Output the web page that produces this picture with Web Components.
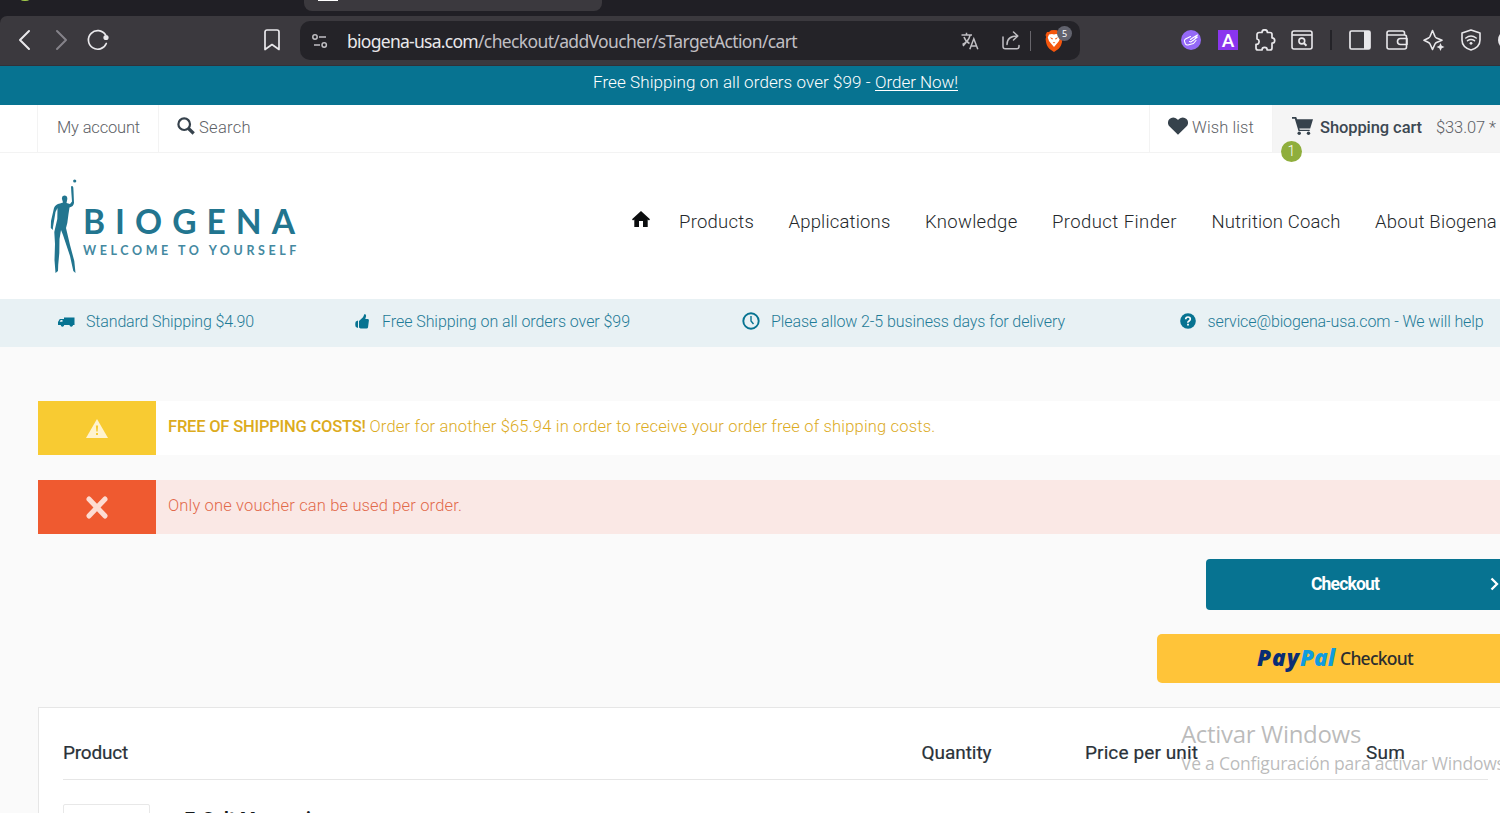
<!DOCTYPE html>
<html lang="en">
<head>
<meta charset="utf-8">
<title>Shopping cart | Biogena</title>
<style>
    html, body {
        margin: 0;
        height: 813px;
        overflow: hidden;
    }

    body {
        --teal: #077391;
        --text: #5b6168;
        background: #fafafa;
        font-family: Roboto, "Liberation Sans", sans-serif;
        font-weight: 300;
        color: var(--text);
    }
</style>
</head>
<body>
<shop-page></shop-page>

<script>
/**
 * Base class: renders the static `html` of the subclass into an open shadow root
 * @extends {HTMLElement}
 */
class BaseElement extends HTMLElement {
    constructor() {
        super();
        this.attachShadow({ mode: 'open' });
        this.shadowRoot.innerHTML = this.constructor.html;
    }
}

/**
 * Line of text tracked out to a given width
 * Attributes: w (px)
 */
class TextRun extends BaseElement {
    static html = `
        <style>
            :host { display: block; white-space: nowrap; flex: none; }
            span { display: inline-block; white-space: pre; text-decoration: inherit; text-underline-offset: inherit; }
        </style>
        <span><slot></slot></span>
    `;

    connectedCallback() {
        const target = Number(this.getAttribute('w'));
        const span = this.shadowRoot.querySelector('span');
        const chars = this.textContent.length;
        if (!target || !chars) {
            return;
        }
        const natural = span.getBoundingClientRect().width;
        span.style.letterSpacing = `${(target - natural) / chars}px`;
        this.style.width = `${target}px`;
    }
}

const ICONS = {
    back: ['0 0 24 24', '<path d="M17 3 8 12l9 9" fill="none" stroke="currentColor" stroke-width="2" stroke-linecap="round" stroke-linejoin="round"/>'],
    forward: ['0 0 24 24', '<path d="m7 3 9 9-9 9" fill="none" stroke="currentColor" stroke-width="2" stroke-linecap="round" stroke-linejoin="round"/>'],
    reload: ['0 0 24 24', '<path d="M20.300 15.500A9.300 9.300 0 1 1 19.500 6.800" fill="none" stroke="currentColor" stroke-width="1.700" stroke-linecap="round"/><circle cx="20" cy="9.500" r="2.600" fill="currentColor"/>'],
    bookmark: ['0 0 16 22', '<path d="M1 3a2 2 0 0 1 2-2h10a2 2 0 0 1 2 2v17.500l-7-5-7 5z" fill="none" stroke="currentColor" stroke-width="1.700" stroke-linejoin="round"/>'],
    tune: ['0 0 16 14', '<g fill="none" stroke="currentColor" stroke-width="1.500"><circle cx="3" cy="3" r="2.200"/><path d="M7 3h7M2 11h6"/><circle cx="12.200" cy="11" r="2.200"/></g>'],
    translate: ['0 0 18 18', '<g fill="none" stroke="currentColor" stroke-width="1.500"><path d="M.5 3h10.500M5.500.8V3M2 14l3-3.600M3 5c1 3 3.500 5.500 5.500 6.500M9 3.500C8 7.500 5 10.800 1.500 12.500"/><path d="m8.800 17.300 4-10.500 4 10.500M10 14h5.600"/></g>'],
    share: ['0 0 18 19', '<g fill="none" stroke="currentColor" stroke-width="1.500" stroke-linecap="round" stroke-linejoin="round"><path d="M1 6v9.500a2.300 2.300 0 0 0 2.300 2.300h11.400a2.300 2.300 0 0 0 2.300-2.300v-1"/><path d="M5 13.500C5 8 8.500 5 15.500 5M11.500 1l4.300 4-4.300 4"/></g>'],
    brave: ['0 0 18 22', '<path d="M9 0l3 .2L14 2h2l1.500 3-.7 2 .6 2c-.4 5-1.800 8-4 10L9 22l-4.400-3C2.400 17 1 14 .6 9l.6-2L.5 5 2 2h2L6 .2z" fill="#f4560e"/><path d="M4 4.500 7 4l2 .6 2-.6 3 .5 1.200 3-1.200 3.500-1.800 2.200L9 17l-3.200-3.800L4 11 2.800 7.500z" fill="#fff"/><path d="m4.800 7.300 3 1-.5 1.500zM13.200 7.300l-3 1 .5 1.500zM7.600 12.200h2.800L9 13.600z" fill="#f4560e"/>'],
    tag: ['0 0 20 20', '<circle cx="10" cy="10" r="10" fill="#9469f6"/><path d="M9.500 6.500 4.500 9q-1.500 1-1 2.500l1 2.500q.7 1.300 2.500 1l5.500-1.500 2.500-3M8.500 11.500q2 1 3-1M9.500 9.500 11.500 8l5-3M12 10.500 16.300 7l-3-.3" fill="none" stroke="#fff" stroke-width="1.100" stroke-linejoin="round" stroke-linecap="round"/>'],
    puzzle: ['0 0 22 22', '<path d="M5 3.500h3a2.700 2.700 0 0 1 5.400 0H16a2 2 0 0 1 2 2v3.300a2.700 2.700 0 0 1 0 5.400V19a2 2 0 0 1-2 2h-2.800a2.600 2.600 0 0 0-5.200 0H4a2 2 0 0 1-2-2v-3.700a2.700 2.700 0 0 0 1-5.300V5.500a2 2 0 0 1 2-2z" fill="none" stroke="currentColor" stroke-width="1.700" stroke-linejoin="round"/>'],
    winsearch: ['0 0 22 20', '<g fill="none" stroke="currentColor" stroke-width="1.600"><rect x="1" y="1" width="20" height="18" rx="2"/><path d="M1 5h20"/><circle cx="10.800" cy="11" r="2.900"/><path d="m13 13.200 2.500 2.500" stroke-width="2"/></g>'],
    sidebar: ['0 0 22 20', '<rect x="1" y="1" width="20" height="18" rx="1.500" fill="none" stroke="currentColor" stroke-width="1.700"/><path d="M15 1h6v18h-6z" fill="currentColor"/>'],
    wallet: ['0 0 22 20', '<g fill="none" stroke="currentColor" stroke-width="1.600" stroke-linejoin="round"><path d="M18.500 5V3a2 2 0 0 0-2-2H3a2 2 0 0 0-2 2v14a2 2 0 0 0 2 2h15.500a2 2 0 0 0 2-2V7a2 2 0 0 0-2-2H1.500"/><path d="M21 8.500h-6.500a3 3 0 0 0 0 6H21z"/></g>'],
    sparkle: ['0 0 22 22', '<path d="M9.500 1.500 12 7.500q.5 1 1.500 1.500l5.500 2.300-5.500 2.200q-1 .5-1.500 1.500l-2.500 5.500L7 15q-.5-1-1.500-1.500L1 11.300 5.500 9Q6.500 8.500 7 7.500z" fill="none" stroke="currentColor" stroke-width="1.600" stroke-linejoin="round"/><path d="m17.500 14 1.200 2.800 2.800 1.200-2.800 1.200-1.200 2.800-1.200-2.800-2.800-1.200 2.800-1.200z" fill="currentColor"/>'],
    vpn: ['0 0 20 22', '<path d="M10 1 19 4v7c0 5-4 8.500-9 10-5-1.500-9-5-9-10V4z" fill="none" stroke="currentColor" stroke-width="1.600" stroke-linejoin="round"/><g fill="none" stroke="currentColor" stroke-width="1.500" stroke-linecap="round"><path d="M4.800 9q5.200-3.800 10.400 0M6.500 11.700q3.500-2.500 7 0"/></g><circle cx="10" cy="14.300" r="1.400" fill="currentColor"/>'],
    search: ['0 0 18 18', '<circle cx="7.200" cy="7.200" r="5.800" fill="none" stroke="currentColor" stroke-width="2.200"/><path d="m11.500 11.500 5.200 5" stroke="currentColor" stroke-width="3.200"/>'],
    heart: ['0 0 20 18', '<path d="M10 17.800 1.600 9.600A5.300 5.300 0 0 1 1.500 2 5.200 5.200 0 0 1 9 2l1 1.100L11 2a5.200 5.200 0 0 1 7.500 0 5.300 5.300 0 0 1-.1 7.600z" fill="currentColor"/>'],
    cart: ['0 0 21 18', '<path d="M0 0h4.200l.9 2.200H21L18.200 11.500H7.300l.4 1.300h10V14H6.500L2.800 1.700H0z" fill="currentColor"/><circle cx="7.200" cy="16.200" r="1.700" fill="currentColor"/><circle cx="16.500" cy="16.200" r="1.700" fill="currentColor"/>'],
    home: ['0 0 18 17', '<path d="M9 0l9 8.300-1 1.200-1.300-1V16H11v-6H7v6H2.300V8.500L1 9.500 0 8.300z" fill="currentColor"/>'],
    truck: ['0 0 17 10', '<path d="M6 .5h10.500V8H15a1.800 1.800 0 0 1-3.500 0H6.200a1.800 1.800 0 0 1-3.500 0H0V5l1.800-3H6z" fill="currentColor"/><path d="M1.700 4.800 2.700 3h1.800v1.800z" fill="#e8f1f4"/><circle cx="4.400" cy="8" r="1.500" fill="currentColor"/><circle cx="13.200" cy="8" r="1.500" fill="currentColor"/>'],
    thumb: ['0 0 14 15', '<path d="M.8 7.500 3 6.500 3 14 .8 13Q-.3 10 .8 7.500zM4 7l4-3.700L9.500 0Q11.500.3 11 2.500L10.300 5H13Q14 5.300 13.900 6.500L13 13.500Q12.800 14.500 11.500 14.500H5.500L4 13.500z" fill="currentColor"/>'],
    clock: ['0 0 18 18', '<circle cx="9" cy="9" r="7.700" fill="none" stroke="currentColor" stroke-width="1.900"/><path d="M9 4v5l2.500 3" fill="none" stroke="currentColor" stroke-width="1.400"/>'],
    help: ['0 0 16 16', '<circle cx="8" cy="8" r="7.800" fill="currentColor"/><path d="M5.700 6.200Q5.800 4 8 4t2.300 2Q10.300 7.200 9 8T8 9.800" fill="none" stroke="#fff" stroke-width="1.700"/><path d="M7.100 10.700h1.800v1.700H7.100z" fill="#fff"/>'],
    warning: ['0 0 22 19', '<path d="M11 0 22 19H0z" fill="#fff3cf"/><path d="M9.900 6.500h2.200l-.4 6h-1.400zM10 14h2v2h-2z" fill="#f8cb32"/>'],
    cross: ['0 0 22 22', '<path d="m3 3 16 16M19 3 3 19" stroke="#fddcd2" stroke-width="5" stroke-linecap="round"/>'],
    chevron: ['0 0 9 14', '<path d="m1.500 1.500 5.500 5.500-5.500 5.500" fill="none" stroke="currentColor" stroke-width="2.300"/>'],
    figure: ['0 0 28 96', '<g fill="currentColor"><circle cx="24.700" cy="2" r="1.600"/><path d="M21 7.500q1.500-1.300 2.300 1L23.500 12 24 24Q23.500 27.500 19.500 28.500L18.500 35 17.300 44 16 49 20 66 24.300 82 25.500 94 23.300 92 20 77 13 56 11 51 9.500 60 9.300 74 8.200 86 8 92 5.500 94 4.500 81 5 65 4.300 53 7.300 40 7.500 29 5.500 33 4 42 3 48 2.800 51 .8 49 1 42 4 29Q5.500 25 10 24.500L13 23.500 12 20Q11.500 16.500 14.300 16.500 17.500 16.500 17.300 20L16.500 24 20 25 22 22.500 21.300 13z"/></g>']
};

/**
 * Inline icon
 * Attributes: name, w, h (px)
 */
class UiIcon extends HTMLElement {
    connectedCallback() {
        const [viewBox, body] = ICONS[this.getAttribute('name')];
        const w = this.getAttribute('w');
        const h = this.getAttribute('h');
        const root = this.attachShadow({ mode: 'open' });
        root.innerHTML = `
            <style>
                :host { display: block; flex: none; width: ${w}px; height: ${h}px; }
                svg { display: block; }
            </style>
            <svg width="${w}" height="${h}" viewBox="${viewBox}" preserveAspectRatio="none">${body}</svg>
        `;
    }
}

/** Browser window frame: tab strip, toolbar and address bar */
class BrowserBar extends BaseElement {
    static html = `
        <style>
            :host {
                display: block;
                height: 66px;
                background: #201f25;
                color: #e9e8eb;
                overflow: hidden;
                font-family: "Noto Sans", "Open Sans", sans-serif;
                font-weight: 400;
            }
            .tabs { display: flex; height: 16px; }
            .favicon { width: 10px; height: 5px; margin: -4px 0 0 20px; border-radius: 50%; background: #a5cf4c; }
            .tab { width: 298px; height: 11px; margin-left: 274px; border-radius: 0 0 8px 8px; background: #3b393e; }
            .tab i { display: block; width: 20px; height: 1px; margin-left: 14px; background: #fff; }
            .toolbar {
                box-sizing: border-box;
                display: flex;
                align-items: center;
                height: 50px;
                padding: 0 0 1px 12px;
                border-radius: 7px 0 0 0;
                border-bottom: 1px solid #323138;
                background: #3b393e;
            }
            .dim { color: #85838a; }
            .address {
                box-sizing: border-box;
                display: flex;
                align-items: center;
                width: 780px;
                height: 39px;
                margin: 1px 0 0 20px;
                padding-left: 12px;
                border-radius: 10px;
                background: #242328;
                color: #c0bfc3;
                flex: none;
            }
            .url { display: flex; margin-left: 19px; font-size: 17.5px; line-height: 24px; }
            .url b { color: #e9e8eb; font-weight: 400; }
            .rule { width: 1px; height: 20px; background: #68666c; margin-left: 10px; }
            .shield { position: relative; margin-left: 14px; }
            .count {
                position: absolute;
                left: 12px;
                top: -4px;
                width: 15px;
                height: 15px;
                border-radius: 50%;
                background: #62636e;
                color: #fff;
                font-size: 9px;
                line-height: 15px;
                text-align: center;
            }
            .ext { display: flex; align-items: center; margin-left: 101px; gap: 16px; }
            .letter {
                width: 20px;
                height: 20px;
                margin-left: 1px;
                background: #8a35ee;
                color: #fff;
                font: 500 19px/21px Roboto, sans-serif;
                text-align: center;
            }
            .sep { width: 2px; height: 20px; background: #242328; margin: 0 2px 0 1px; }
            .edge { width: 20px; height: 20px; border-radius: 50%; background: #e9e8eb; flex: none; margin-left: 1px; }
        </style>
        <div class="tabs"><div class="favicon"></div><div class="tab"><i></i></div></div>
        <div class="toolbar">
            <ui-icon name="back" w="24" h="24"></ui-icon>
            <ui-icon name="forward" w="24" h="24" class="dim" style="margin-left:14px"></ui-icon>
            <ui-icon name="reload" w="24" h="24" style="margin-left:12px"></ui-icon>
            <ui-icon name="bookmark" w="16" h="22" style="margin-left:154px"></ui-icon>
            <div class="address">
                <ui-icon name="tune" w="16" h="14"></ui-icon>
                <div class="url"><b><text-run w="131">biogena-usa.com</text-run></b><text-run w="319">/checkout/addVoucher/sTargetAction/cart</text-run></div>
                <ui-icon name="translate" w="18" h="18" style="margin-left:164px"></ui-icon>
                <ui-icon name="share" w="18" h="19" style="margin-left:23px"></ui-icon>
                <div class="rule"></div>
                <div class="shield"><ui-icon name="brave" w="18" h="22"></ui-icon><div class="count">5</div></div>
            </div>
            <div class="ext">
                <ui-icon name="tag" w="20" h="20"></ui-icon>
                <div class="letter">A</div>
                <ui-icon name="puzzle" w="22" h="22"></ui-icon>
                <ui-icon name="winsearch" w="22" h="20" style="margin-left:-1px"></ui-icon>
                <div class="sep"></div>
                <ui-icon name="sidebar" w="22" h="20" style="margin-left:-1px"></ui-icon>
                <ui-icon name="wallet" w="22" h="20" style="margin-left:-1px"></ui-icon>
                <ui-icon name="sparkle" w="22" h="22" style="margin-left:-1px"></ui-icon>
                <ui-icon name="vpn" w="20" h="22"></ui-icon>
                <div class="edge"></div>
            </div>
        </div>
    `;
}

/** Full-width promotion strip */
class PromoBanner extends BaseElement {
    static html = `
        <style>
            :host {
                display: flex;
                height: 39px;
                padding-left: 593px;
                background: var(--teal);
                color: #fff;
                font-size: 17px;
                line-height: 33px;
                overflow: hidden;
            }
            .link { text-decoration: underline; text-underline-offset: 2px; }
        </style>
        <text-run w="282">Free Shipping on all orders over $99 - </text-run>
        <a><text-run class="link" w="83">Order Now!</text-run></a>
    `;
}

/** Account, search, wish list and basket */
class ShopTopbar extends BaseElement {
    static html = `
        <style>
            :host {
                box-sizing: border-box;
                display: flex;
                height: 48px;
                padding-left: 37px;
                border-bottom: 1px solid #f3f3f3;
                background: #fff;
                color: #5d6166;
                font-size: 16.5px;
                line-height: 46px;
            }
            .cell { box-sizing: border-box; display: flex; border-left: 1px solid #f3f3f3; }
            .account { width: 121px; padding-left: 19px; }
            .search { flex: 1; padding-left: 18px; }
            .wish { width: 123px; padding-left: 18px; }
            .cart { position: relative; width: 228px; padding-left: 19px; background: #f5f5f5; }
            ui-icon { color: #36424c; }
            b { font-weight: 500; color: #3c4852; }
            .badge {
                position: absolute;
                left: 8px;
                top: 36px;
                width: 21px;
                height: 21px;
                border-radius: 50%;
                background: #8fae3c;
                color: #fff;
                font-size: 14px;
                line-height: 20px;
                text-align: center;
            }
        </style>
        <div class="cell account"><text-run w="83">My account</text-run></div>
        <div class="cell search">
            <ui-icon name="search" w="18" h="18" style="margin:12px 4px 0 0"></ui-icon>
            <text-run w="52">Search</text-run>
        </div>
        <div class="cell wish">
            <ui-icon name="heart" w="20" h="18" style="margin:12px 4px 0 0"></ui-icon>
            <text-run w="62">Wish list</text-run>
        </div>
        <div class="cell cart">
            <ui-icon name="cart" w="21" h="18" style="margin:12px 7px 0 0"></ui-icon>
            <b><text-run w="102">Shopping cart</text-run></b>
            <text-run w="60" style="margin-left:14px">$33.07 *</text-run>
            <div class="badge">1</div>
        </div>
    `;
}

/** Logo and main navigation */
class ShopHeader extends BaseElement {
    static html = `
        <style>
            :host {
                display: flex;
                height: 146px;
                background: #fff;
                color: #24282b;
                font-size: 18.5px;
                overflow: hidden;
            }
            .logo {
                box-sizing: border-box;
                display: flex;
                flex: none;
                width: 632px;
                padding: 26px 0 0 50px;
                color: #22758f;
                font-family: Lato, sans-serif;
            }
            .words { padding-left: 5px; }
            .name { font-size: 33.5px; line-height: 40px; font-weight: 700; margin-top: 22px; }
            .claim { font-size: 12.5px; line-height: 16px; font-weight: 700; margin-top: 2px; color: #4489a1; }
            nav { display: flex; line-height: 139px; }
            nav ui-icon { margin: 58px 29px 0 0; color: #0b0d0e; }
            nav text-run { margin-right: 34.5px; }
        </style>
        <div class="logo">
            <ui-icon name="figure" w="28" h="96"></ui-icon>
            <div class="words">
                <text-run class="name" w="222">BIOGENA</text-run>
                <text-run class="claim" w="217">WELCOME TO YOURSELF</text-run>
            </div>
        </div>
        <nav>
            <ui-icon name="home" w="18" h="17"></ui-icon>
            <text-run w="75">Products</text-run>
            <text-run w="102">Applications</text-run>
            <text-run w="92.5">Knowledge</text-run>
            <text-run w="125">Product Finder</text-run>
            <text-run w="129">Nutrition Coach</text-run>
            <text-run w="122">About Biogena</text-run>
        </nav>
    `;
}

/** Shipping and service facts */
class ShopUsps extends BaseElement {
    static html = `
        <style>
            :host {
                display: flex;
                height: 48px;
                padding-left: 57px;
                background: #e8f1f4;
                color: #1f7b97;
                font-size: 16px;
                line-height: 45px;
                overflow: hidden;
            }
            div { display: flex; flex: none; }
            ui-icon { color: var(--teal); }
        </style>
        <div style="width:298px">
            <ui-icon name="truck" w="17" h="10" style="margin:18px 11px 0 1px"></ui-icon>
            <text-run w="168">Standard Shipping $4.90</text-run>
        </div>
        <div style="width:387px">
            <ui-icon name="thumb" w="14" h="15" style="margin:15px 13px 0 0"></ui-icon>
            <text-run w="248">Free Shipping on all orders over $99</text-run>
        </div>
        <div style="width:437.5px">
            <ui-icon name="clock" w="18" h="18" style="margin:13px 11px 0 0"></ui-icon>
            <text-run w="294">Please allow 2-5 business days for delivery</text-run>
        </div>
        <div>
            <ui-icon name="help" w="16" h="16" style="margin:14px 12px 0 0"></ui-icon>
            <text-run w="276">service@biogena-usa.com - We will help</text-run>
        </div>
    `;
}

/** Message row with an icon cell; the text comes through the slot */
class AlertBox extends BaseElement {
    static html = `
        <style>
            :host { display: flex; height: 54px; background: var(--alert-bg); color: var(--alert-text); font-size: 16.5px; line-height: 52px; }
            .icon { box-sizing: border-box; display: flex; align-items: center; justify-content: center; width: 118px; padding-right: 1px; background: var(--alert-color); }
            .content { display: flex; padding-left: 12px; }
            ::slotted(b) { font-weight: 500; }
        </style>
        <div class="icon"><slot name="icon"></slot></div>
        <div class="content"><slot></slot></div>
    `;
}

/** Basket table */
class CartTable extends BaseElement {
    static html = `
        <style>
            :host {
                box-sizing: border-box;
                display: block;
                height: 160px;
                padding: 0 12px 0 24px;
                border: solid #e6e6e6;
                border-width: 1px 0 0 1px;
                background: #fff;
                color: #2a3239;
                font-weight: 400;
            }
            .head {
                box-sizing: border-box;
                display: grid;
                grid-template-columns: 858.5px 163.500px 281px 1fr;
                height: 72px;
                border-bottom: 1px solid #e6e6e6;
                font-size: 19px;
                line-height: 90px;
                -webkit-text-stroke: 0.2px;
            }
            .row { display: flex; padding-top: 24px; }
            .thumb { width: 85px; height: 85px; border: 1px solid #e8e8e8; border-radius: 2px; }
            .name { margin: 3px 0 0 35px; font-size: 18px; line-height: 24px; font-weight: 700; color: #15191c; }
        </style>
        <div class="head">
            <text-run w="65">Product</text-run>
            <text-run w="70">Quantity</text-run>
            <text-run w="113">Price per unit</text-run>
            <text-run w="39">Sum</text-run>
        </div>
        <div class="row">
            <div class="thumb"></div>
            <text-run class="name" w="152">7-Salt Magnesium</text-run>
        </div>
    `;
}

/** Cart contents: messages, checkout actions and table */
class CartPage extends BaseElement {
    static html = `
        <style>
            :host { display: block; padding: 54px 0 0 38px; }
            .warning { --alert-color: #f8cb32; --alert-bg: #fff; --alert-text: #dcab1e; }
            .error { --alert-color: #ef5a30; --alert-bg: #fae8e5; --alert-text: #e26a4b; margin-top: 25px; }
            .actions { display: flex; flex-direction: column; align-items: flex-end; gap: 24px; margin: 25px 0 24px; }
            .checkout {
                display: flex;
                width: 294px;
                height: 51px;
                border-radius: 4px 0 0 4px;
                background: var(--teal);
                color: #fff;
                font-size: 17.5px;
                line-height: 51px;
                font-weight: 700;
            }
            .paypal {
                display: flex;
                width: 343px;
                height: 49px;
                border-radius: 5px 0 0 5px;
                background: #ffc439;
                color: #2c2e2f;
                font: 500 17.5px/49px "Noto Sans", "Open Sans", sans-serif;
            }
            .mark { display: flex; margin-left: 100px; font: italic 800 22.5px/47px "Open Sans", "Noto Sans", sans-serif; color: #0a2d74; }
            .mark .pal { color: #109cde; }
        </style>
        <alert-box class="warning">
            <ui-icon slot="icon" name="warning" w="22" h="19"></ui-icon>
            <b><text-run w="201.5">FREE OF SHIPPING COSTS! </text-run></b>
            <text-run w="566">Order for another $65.94 in order to receive your order free of shipping costs.</text-run>
        </alert-box>
        <alert-box class="error">
            <ui-icon slot="icon" name="cross" w="22" h="23"></ui-icon>
            <text-run w="294">Only one voucher can be used per order.</text-run>
        </alert-box>
        <div class="actions">
            <div class="checkout">
                <text-run w="68" style="margin-left:105px">Checkout</text-run>
                <ui-icon name="chevron" w="9" h="14" style="margin:18px 0 0 111px"></ui-icon>
            </div>
            <div class="paypal">
                <div class="mark"><text-run w="43">Pay</text-run><text-run class="pal" w="35">Pal</text-run></div>
                <text-run w="73" style="margin-left:5px">Checkout</text-run>
            </div>
        </div>
        <cart-table></cart-table>
    `;
}

/** Desktop activation notice lying over the window */
class ActivationNotice extends BaseElement {
    static html = `
        <style>
            :host {
                position: absolute;
                left: 1181px;
                top: 718px;
                width: 319px;
                overflow: hidden;
                color: rgba(120, 120, 120, 0.5);
                font-family: "Open Sans", "Noto Sans", sans-serif;
                font-weight: 400;
            }
            .title { font-size: 24px; line-height: 32px; }
            .hint { font-size: 17.5px; line-height: 26px; }
        </style>
        <text-run class="title" w="180">Activar Windows</text-run>
        <text-run class="hint" w="328">Ve a Configuración para activar Windows.</text-run>
    `;
}

/** The whole window */
class ShopPage extends BaseElement {
    static html = `
        <style>
            :host { display: block; position: relative; width: 1500px; height: 813px; overflow: hidden; }
        </style>
        <browser-bar></browser-bar>
        <promo-banner></promo-banner>
        <shop-topbar></shop-topbar>
        <shop-header></shop-header>
        <shop-usps></shop-usps>
        <cart-page></cart-page>
        <activation-notice></activation-notice>
    `;
}

customElements.define('text-run', TextRun);
customElements.define('ui-icon', UiIcon);
customElements.define('browser-bar', BrowserBar);
customElements.define('promo-banner', PromoBanner);
customElements.define('shop-topbar', ShopTopbar);
customElements.define('shop-header', ShopHeader);
customElements.define('shop-usps', ShopUsps);
customElements.define('alert-box', AlertBox);
customElements.define('cart-table', CartTable);
customElements.define('cart-page', CartPage);
customElements.define('activation-notice', ActivationNotice);
customElements.define('shop-page', ShopPage);
</script>
</body>
</html>
